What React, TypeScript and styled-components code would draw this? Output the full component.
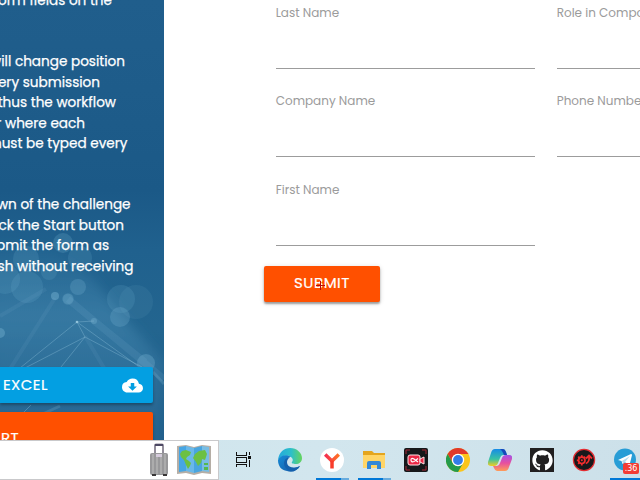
import React from 'react';
import styled, { createGlobalStyle } from 'styled-components';
import { MdCloudDownload } from 'react-icons/md';
import { FaGithub } from 'react-icons/fa';

const Global = createGlobalStyle`
  * { box-sizing: border-box; }
  body { margin: 0; overflow: hidden; background: #fff; font-family: Poppins, Inter, sans-serif; }
  svg { display: block; flex: none; }
`;

const Screen = styled.div`
  width: 640px;
  height: 480px;
  display: grid;
  grid-template-rows: 440px 40px;
  overflow: hidden;
`;
const Page = styled.main`
  display: grid;
  grid-template-columns: 164px 476px;
  overflow: hidden;
`;
const Sidebar = styled.aside`
  position: relative;
  isolation: isolate;
  height: 440px;
  overflow: hidden;
  background: linear-gradient(#205e8c 0, #1e5c8a 90px, #1b5987 190px, #20618e 250px, #23658f 330px, #1d5b87 440px);
`;
const Backdrop = styled.svg`
  position: absolute;
  z-index: -1;
  left: 0;
  top: 200px;
`;
const Instructions = styled.div`
  height: 367px;
  margin-top: -9px;
  margin-bottom: 9px;
  color: #fff;
  font-size: 13.6px;
  -webkit-text-stroke: 0.25px #fff;
`;
const Line = styled.div<{ $end: number }>`
  display: flex;
  justify-content: flex-end;
  width: ${p => p.$end}px;
  height: 20.45px;
  line-height: 20.45px;
  white-space: pre;
`;
const Gap = styled.div`
  height: 40.8px;
`;
const SideButton = styled.div<{ $tall?: boolean }>`
  display: flex;
  align-items: center;
  justify-content: space-between;
  width: 153px;
  height: ${p => (p.$tall ? 54 : 36)}px;
  margin-bottom: 9px;
  padding: 0 10px 0 3px;
  border-radius: 0 2px 2px 0;
  background: ${p => (p.$tall ? '#ff5000' : '#039fe2')};
  color: #fff;
  font-size: 15px;
  letter-spacing: 0.4px;
  box-shadow: 0 2px 3px rgba(0, 0, 0, 0.3);
`;
const ButtonText = styled.span`
  padding-bottom: 2px;
  -webkit-text-stroke: 0.2px #fff;
`;
const StartText = styled(ButtonText)`
  display: flex;
  justify-content: flex-end;
  width: 16px;
  padding-bottom: 4px;
`;
const Form = styled.section`
  padding: 1px 0 0 100px;
  overflow: hidden;
`;
const Fields = styled.div`
  display: grid;
  grid-template-columns: 259px 259px;
  column-gap: 22px;
  padding-left: 11.7px;
  grid-template-rows: 88.45px 88.45px 88.1px;
`;
const Field = styled.div`
  height: 68px;
  padding-top: 3px;
  border-bottom: 1px solid #9c9c9c;
  color: #9b9b9b;
  font-size: 12px;
  line-height: 17px;
  white-space: nowrap;
`;
const Submit = styled.div`
  position: relative;
  width: 116px;
  height: 36px;
  display: grid;
  place-items: center;
  border-radius: 2px;
  background: #ff5000;
  color: #fff;
  font-size: 15px;
  letter-spacing: 0.5px;
  box-shadow: 0 2px 2px rgba(0, 0, 0, 0.32), 0 1px 5px rgba(0, 0, 0, 0.16);
`;
const Cursor = styled.svg`
  position: absolute;
  left: 52px;
  top: 15px;
`;
const Taskbar = styled.footer`
  display: flex;
  background: linear-gradient(100deg, #cee5ec, #d2e6ee 50%, #cce0e9);
`;
const Search = styled.div`
  display: flex;
  align-items: center;
  justify-content: flex-end;
  gap: 8px;
  width: 219px;
  height: 40px;
  padding-right: 7px;
  border: 1px solid #c9c9cb;
  border-left: 0;
  background: #fff;
`;
const Task = styled.div`
  position: relative;
  display: grid;
  place-items: center;
  flex: none;
  width: 42px;
  height: 40px;
`;
const TaskView = styled(Task)`
  width: 50px;
  padding-right: 2px;
`;
const Running = styled.i<{ $solid?: boolean }>`
  position: absolute;
  left: 5px;
  bottom: 0;
  width: 33px;
  height: 2px;
  background: linear-gradient(90deg, #0078d7 ${p => (p.$solid ? 100 : 76)}%, #68acde ${p => (p.$solid ? 100 : 76)}%);
`;
const Count = styled.span`
  position: absolute;
  left: 18px;
  top: 23px;
  width: 16px;
  height: 11px;
  border-radius: 2px;
  background: #f23c34;
  color: #fff;
  font: 8px/11px 'DejaVu Sans', sans-serif;
  text-align: center;
`;
const GithubTile = styled.div`
  display: grid;
  place-items: center;
  width: 24px;
  height: 24px;
  background: #211f20;
  color: #fff;
`;

const Network = () => (
  <Backdrop width="164" height="240" viewBox="0 200 164 240">
    <defs>
      <linearGradient id="haze" x1="0" y1="0" x2="0" y2="1">
        <stop offset="0" stopColor="#5b9fc6" stopOpacity="0" />
        <stop offset=".35" stopColor="#5b9fc6" stopOpacity=".34" />
        <stop offset="1" stopColor="#4889b5" stopOpacity=".14" />
      </linearGradient>
      <filter id="soft" x="-20%" y="-20%" width="140%" height="140%"><feGaussianBlur stdDeviation="6" /></filter>
      <filter id="edge" x="-20%" y="-20%" width="140%" height="140%"><feGaussianBlur stdDeviation=".6" /></filter>
    </defs>
    <path d="M-10 240L50 248 91 276 122 316 164 362V450H-10Z" fill="url(#haze)" filter="url(#soft)" />
    <g fill="#78b4d2" fillOpacity=".16" filter="url(#edge)">
      <circle cx="63" cy="243" r="10" fillOpacity=".22" /><circle cx="80" cy="258" r="12" /><circle cx="26" cy="259" r="13" />
      <circle cx="49" cy="272" r="8" /><circle cx="78" cy="287" r="8" fillOpacity=".25" /><circle cx="27" cy="287" r="16" />
      <circle cx="5" cy="279" r="15" /><circle cx="121" cy="299" r="14" />
      <circle cx="136" cy="302" r="17" fillOpacity=".1" /><circle cx="120" cy="317" r="10" fillOpacity=".25" />
      <circle cx="68" cy="299" r="6" fillOpacity=".1" /><circle cx="68" cy="299" r="5" fillOpacity=".1" />
      <circle cx="68" cy="299" r="5.5" fillOpacity=".25" /><circle cx="55" cy="296" r="4" fillOpacity=".45" />
      <circle cx="0" cy="333" r="5" fillOpacity=".4" /><circle cx="146" cy="363" r="9" fillOpacity=".32" />
      <circle cx="94" cy="321" r="3" fillOpacity=".35" />
    </g>
    <g fill="none" stroke="#8fc1dc">
      <path d="M68 299L164 379M94 321L145 362" strokeWidth="7" strokeOpacity=".12" />
      <path d="M55 298L10 369M0 316L46 289M85 336L104 368" strokeWidth="4" strokeOpacity=".09" />
      <path d="M77 322L20 368M77 322L138 366M77 322L85 337L25 368M85 337L61 367M85 337L142 367M77 322L94 321M31 405L20 416" strokeOpacity=".36" />
      <path d="M153 372L164 384M60 406L0 434" strokeWidth="3" strokeOpacity=".2" />
    </g>
    <circle cx="77" cy="322" r="1.3" fill="#91c2da" />
  </Backdrop>
);

const Suitcase = () => (
  <svg width="20" height="34" viewBox="0 0 20 34">
    <path d="M6 11V2.5q0-1 1-1h6q1 0 1 1V11" fill="none" stroke="#938e9b" strokeWidth="2" />
    <path d="M6 2h8" stroke="#4d4964" strokeWidth="2" />
    <rect x="1" y="10" width="18" height="22" rx="2" fill="#98989a" />
    <path d="M4 11v20M8 14v17M12 14v17M16 11v20" stroke="#b9b9b9" strokeWidth="1.2" />
    <rect x="7" y="11" width="6" height="3" fill="#d5cbdc" />
    <path d="M3 32h4M14 32h4" stroke="#393637" strokeWidth="2" />
  </svg>
);
const WorldMap = () => (
  <svg width="34" height="30" viewBox="0 0 34 30">
    <path d="M0 1L9 0 17 2 25 0 34 1V29L25 28 17 30 9 28 0 29Z" fill="#b5aea6" />
    <path d="M2 2L9 1V26L2 27Z" fill="#47a6e4" /><path d="M9 1L17 3V28L9 26Z" fill="#6ab8e9" />
    <path d="M17 3L25 1V26L17 28Z" fill="#49a5df" /><path d="M25 1L32 2V27L25 26Z" fill="#78bde4" />
    <path d="M3 9L5 6 9 5 14 7 13 10 10 12 9 14 12 16 14 18 13 21 11 24 9 20 7 15 4 12ZM16 13L18 9 22 6 28 5 30 9 28 15 25 14 24 18 21 21 19 17Z" fill="#6cc043" />
    <path d="M27 18h4v2h-4zM27 22h4v3h-4z" fill="#55b84e" />
  </svg>
);
const TaskViewIcon = () => (
  <svg width="17" height="16" viewBox="0 0 17 16" fill="none" stroke="#111" shapeRendering="crispEdges">
    <path d="M1.5 0v3M11.5 0v3M1 3.5h11M1.5 5.5h10v5h-10zM1.5 15v-2.5h10V15M14.5 0v3M14.5 8v7" />
    <path d="M13 4h3v3h-3z" fill="#111" stroke="none" />
  </svg>
);
const Edge = () => (
  <svg width="24" height="24" viewBox="0 0 24 24">
    <defs>
      <linearGradient id="eg" x1="0" x2="1"><stop stopColor="#23a9dc" /><stop offset=".55" stopColor="#2dbfc9" /><stop offset="1" stopColor="#65d45c" /></linearGradient>
      <linearGradient id="eb" x1="0" y1="0" x2="1" y2="1"><stop stopColor="#168bd6" /><stop offset="1" stopColor="#1457a5" /></linearGradient>
    </defs>
    <path d="M0 12C1 4 6 0 12 0c7 0 12 5 12 10 0 4-3 6-6 6-3 0-5-1-4-2 1-1 1-3 0-4-3-4-11-3-14 2Z" fill="url(#eg)" />
    <path d="M0 12C2 7 9 6 13 9c-3 0-5 2-5 5 0 5 6 8 14 4-3 5-8 7-13 5C3 22 0 18 0 12Z" fill="url(#eb)" />
    <path d="M12 9c-6 1-7 6-5 10 1 2 3 3 5 4 4 0 8-1 10-5-5 3-13 2-13-4 0-2 1-3 3-5Z" fill="#1460ad" />
  </svg>
);
const Yandex = () => (
  <svg width="24" height="24" viewBox="0 0 24 24">
    <defs><linearGradient id="ya" x1="0" x2="1"><stop stopColor="#f42d51" /><stop offset="1" stopColor="#ff7424" /></linearGradient></defs>
    <circle cx="12" cy="12" r="12" fill="#fff" />
    <path d="M5.2 6.5l6.8 6.5 6.8-6.5" fill="none" stroke="url(#ya)" strokeWidth="3.5" />
    <path d="M12 12.5V20.5" stroke="#f83c2b" strokeWidth="3.5" />
  </svg>
);
const Folder = () => (
  <svg width="22" height="20" viewBox="0 0 22 20">
    <path d="M0 1h9l2 2h11v15H0z" fill="#e4a51e" /><path d="M0 5h22v13H0z" fill="#ffd567" />
    <path d="M4 19v-6q0-2 2-2h10q2 0 2 2v6h-4v-4H8v4Z" fill="#3388d7" />
  </svg>
);
const Recorder = () => (
  <svg width="24" height="24" viewBox="0 0 24 24">
    <rect width="24" height="24" rx="2" fill="#15181a" />
    <path d="M2 6V2h4M18 2h4v4M2 18v4h4M18 22h4v-4" fill="none" stroke="#a52734" />
    <rect x="4" y="7" width="12" height="10" rx="2" fill="#eb2845" stroke="#ffe4e7" />
    <path d="M16 11l4-2v7l-4-2z" fill="#eb2845" stroke="#ffe4e7" />
    <path d="M14 10.5l-4 3q-3 1-3-1.5t3-1l4 3" fill="none" stroke="#fff" strokeWidth="1.2" />
  </svg>
);
const Chrome = () => (
  <svg width="24" height="24" viewBox="0 0 24 24">
    <circle cx="12" cy="12" r="12" fill="#fbc51b" />
    <path d="M1.6 6A12 12 0 0 1 22.4 6H12a6 6 0 0 0-5.2 9Z" fill="#e1392b" />
    <path d="M1.6 6A12 12 0 0 0 12 24l5.2-9A6 6 0 0 1 6.8 15Z" fill="#249b4b" />
    <circle cx="12" cy="12" r="6.2" fill="#fff" /><circle cx="12" cy="12" r="4.9" fill="#337de8" />
  </svg>
);
const Copilot = () => (
  <svg width="24" height="22" viewBox="0 0 24 22">
    <defs>
      <linearGradient id="ca" x1="0" y1="0" x2="0" y2="1"><stop stopColor="#168be7" /><stop offset=".6" stopColor="#39c3a3" /><stop offset="1" stopColor="#f4cc20" /></linearGradient>
      <linearGradient id="cb" x1="0" y1="0" x2="0" y2="1"><stop stopColor="#a353e8" /><stop offset=".5" stopColor="#e64f9f" /><stop offset="1" stopColor="#ff9c58" /></linearGradient>
    </defs>
    <path d="M7 0h8q2 0 3 3l1 3h-4q-2 0-3 3l-2 5q-1 3-4 3H3q-4 0-3-4L3 4q1-4 4-4Z" fill="url(#ca)" />
    <path d="M17 22H9q-2 0-3-3l-1-2h4q2 0 3-3l2-5q1-3 4-3h3q4 0 3 4l-3 8q-1 4-4 4Z" fill="url(#cb)" />
    <path d="M12 0h3q2 0 3 3l1 3h-3l-2-4Z" fill="#1648bb" />
  </svg>
);
const GearLogo = () => (
  <svg width="24" height="24" viewBox="0 0 24 24" fill="none">
    <circle cx="12" cy="12" r="10.6" fill="#18191b" stroke="#e52d32" strokeWidth="1.2" />
    <circle cx="9.8" cy="12.3" r="3.2" stroke="#f12d2d" strokeWidth="1.7" />
    <path d="M9.8 7.2v2M9.8 15.5v2M4.8 12.3h2M6.2 8.7l1.5 1.5M6.2 15.9l1.5-1.5M13 8.7l-1.2 1.4M13.8 15.5q4-1.5 3.2-7M14 10.5l3-3 3 3" stroke="#f12d2d" strokeWidth="1.8" />
    <circle cx="9.8" cy="12.3" r="1" fill="#f12d2d" />
  </svg>
);
const Telegram = () => (
  <svg width="24" height="24" viewBox="0 0 24 24">
    <circle cx="11" cy="11.5" r="11" fill="#289dd6" />
    <path d="M4 12L17 6q1 0 1 1l-2.5 10-5-3-2 2-1-3Z" fill="#fff" /><path d="M8 13l8-5-5 6-1.5 2Z" fill="#b7dcee" />
  </svg>
);

export default function App() {
  return (
    <Screen>
      <Global />
      <Page>
        <Sidebar>
          <Network />
          <Instructions>
            <Line $end={112}>form fields on the</Line>
            <Gap />
            <Line $end={125}>will change position</Line>
            <Line $end={100}>every submission</Line>
            <Line $end={116}>thus the workflow</Line>
            <Line $end={85}>or where each</Line>
            <Line $end={127.5}>must be typed every</Line>
            <Gap />
            <Line $end={130.5}>countdown of the challenge</Line>
            <Line $end={124}>click the Start button</Line>
            <Line $end={109}>submit the form as</Line>
            <Line $end={133.5}>refresh without receiving</Line>
          </Instructions>
          <SideButton><ButtonText>EXCEL</ButtonText><MdCloudDownload size={21} /></SideButton>
          <SideButton $tall><StartText>START</StartText></SideButton>
        </Sidebar>
        <Form>
          <Fields>
            <Field>Last Name</Field>
            <Field>Role in Company</Field>
            <Field>Company Name</Field>
            <Field>Phone Number</Field>
            <Field>First Name</Field>
          </Fields>
          <Submit>
            <ButtonText>SUBMIT</ButtonText>
            <Cursor width="9" height="9" viewBox="0 0 9 9" stroke="#b90b0b"><path d="M4.5 0v9M0 4.5h9" /></Cursor>
          </Submit>
        </Form>
      </Page>
      <Taskbar>
        <Search><Suitcase /><WorldMap /></Search>
        <TaskView><TaskViewIcon /></TaskView>
        <Task><Edge /></Task>
        <Task><Yandex /><Running /></Task>
        <Task><Folder /><Running /></Task>
        <Task><Recorder /></Task>
        <Task><Chrome /></Task>
        <Task><Copilot /></Task>
        <Task><GithubTile><FaGithub size={21} /></GithubTile></Task>
        <Task><GearLogo /></Task>
        <Task><Telegram /><Count>.36</Count><Running $solid /></Task>
      </Taskbar>
    </Screen>
  );
}
